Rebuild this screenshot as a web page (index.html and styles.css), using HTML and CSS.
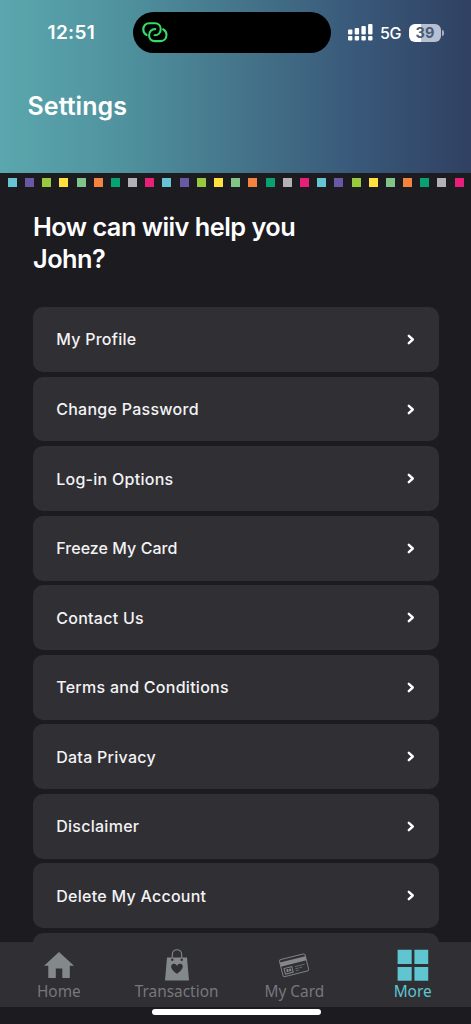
FILE: index.html
```html
<!DOCTYPE html>
<html lang="en">
<head>
<meta charset="utf-8">
<title>Settings</title>
<link rel="stylesheet" href="styles.css">
</head>
<body>
<div class="app">
  <header class="header">
    <div class="status">
      <span class="time">12:51</span>
      <div class="island">
        <svg class="link" width="26" height="21" viewBox="0 0 26 21" fill="none" stroke="#35dc69" stroke-width="2.1" stroke-linecap="round">
          <path d="M4.6 13C2.6 12 1.3 10 1.3 7.5C1.3 3.9 3.6 1.3 7.2 1.3H13C16.5 1.3 18.7 3.7 18.7 7C18.7 10.7 16.3 13.3 12.6 13.3"/>
          <path d="M21.1 7.3C23.2 8.4 24.5 10.4 24.5 12.8C24.5 16.4 22 19.1 18.5 19.1H12.8C9.3 19.1 7.1 16.6 7.1 13.4C7.1 9.5 9.6 7.1 13.3 7.1"/>
        </svg>
      </div>
      <div class="indicators">
        <svg width="25" height="17" viewBox="0 0 25 17" fill="#fff">
          <rect x="0" y="5.5" width="4.4" height="5" rx="1"/><rect x="6.7" y="4" width="4.4" height="6.5" rx="1"/><rect x="13.4" y="2" width="4.4" height="8.5" rx="1"/><rect x="20.1" y="0" width="4.4" height="10.5" rx="1"/>
          <rect x="0" y="12" width="4.4" height="4.4" rx="1"/><rect x="6.7" y="12" width="4.4" height="4.4" rx="1"/><rect x="13.4" y="12" width="4.4" height="4.4" rx="1"/><rect x="20.1" y="12" width="4.4" height="4.4" rx="1"/>
        </svg>
        <span class="network">5G</span>
        <span class="battery">39</span>
        <span class="battery-tip"></span>
      </div>
    </div>
    <h1 class="title">Settings</h1>
  </header>
  <div class="strip">
    <i class="sky"></i><i class="violet"></i><i class="lime"></i><i class="yellow"></i><i class="mint"></i><i class="orange"></i><i class="green"></i><i class="gray"></i><i class="pink"></i>
    <i class="sky"></i><i class="violet"></i><i class="lime"></i><i class="yellow"></i><i class="mint"></i><i class="orange"></i><i class="green"></i><i class="gray"></i><i class="pink"></i>
    <i class="sky"></i><i class="violet"></i><i class="lime"></i><i class="yellow"></i><i class="mint"></i><i class="orange"></i><i class="green"></i><i class="gray"></i><i class="pink"></i>
  </div>
  <main class="content">
    <h2 class="greeting">How can wiiv help you<br>John?</h2>
    <div class="list">
      <div class="row"><span>My Profile</span><svg class="chevron" viewBox="0 0 8 11"><path d="M1.8 1.8L5.8 5.5L1.8 9.2"/></svg></div>
      <div class="row"><span>Change Password</span><svg class="chevron" viewBox="0 0 8 11"><path d="M1.8 1.8L5.8 5.5L1.8 9.2"/></svg></div>
      <div class="row"><span>Log-in Options</span><svg class="chevron" viewBox="0 0 8 11"><path d="M1.8 1.8L5.8 5.5L1.8 9.2"/></svg></div>
      <div class="row tight"><span>Freeze My Card</span><svg class="chevron" viewBox="0 0 8 11"><path d="M1.8 1.8L5.8 5.5L1.8 9.2"/></svg></div>
      <div class="row"><span>Contact Us</span><svg class="chevron" viewBox="0 0 8 11"><path d="M1.8 1.8L5.8 5.5L1.8 9.2"/></svg></div>
      <div class="row"><span>Terms and Conditions</span><svg class="chevron" viewBox="0 0 8 11"><path d="M1.8 1.8L5.8 5.5L1.8 9.2"/></svg></div>
      <div class="row"><span>Data Privacy</span><svg class="chevron" viewBox="0 0 8 11"><path d="M1.8 1.8L5.8 5.5L1.8 9.2"/></svg></div>
      <div class="row"><span>Disclaimer</span><svg class="chevron" viewBox="0 0 8 11"><path d="M1.8 1.8L5.8 5.5L1.8 9.2"/></svg></div>
      <div class="row"><span>Delete My Account</span><svg class="chevron" viewBox="0 0 8 11"><path d="M1.8 1.8L5.8 5.5L1.8 9.2"/></svg></div>
      <div class="row"></div>
    </div>
  </main>
  <nav class="nav">
    <div class="tab">
      <svg width="32" height="32" viewBox="0 0 32 32" fill="#83888b"><path d="M16 3L31 16.7H26.8V29H19.3V19.5H12.8V29H5.3V16.7H1Z"/></svg>
      <span>Home</span>
    </div>
    <div class="tab">
      <svg width="32" height="32" viewBox="0 0 32 32"><path d="M11.3 10V5.8C11.3 -1 20.7 -1 20.7 5.8V10" fill="none" stroke="#83888b" stroke-width="1.1"/><path d="M6 8.5H26L28 31.5H4Z" fill="#83888b"/><circle cx="11.3" cy="10.8" r="1.2" fill="#302f34"/><circle cx="20.7" cy="10.8" r="1.2" fill="#302f34"/><path d="M16 24.8C7.2 18.8 10.3 14.6 13 14.8C14.8 14.9 15.5 16.1 16 17C16.5 16.1 17.2 14.9 19 14.8C21.7 14.6 24.8 18.8 16 24.8Z" fill="#302f34"/></svg>
      <span>Transaction</span>
    </div>
    <div class="tab">
      <svg width="32" height="32" viewBox="0 0 32 32"><g transform="rotate(-14 16 16)"><rect x="2.8" y="7.5" width="26.4" height="17.6" rx="1.8" fill="none" stroke="#7d7f83" stroke-width="1"/><path d="M2.8 10.2H29.2V14.5H2.8Z" fill="#85888b"/><rect x="5.5" y="17" width="8" height="5.8" fill="none" stroke="#85888b"/><path d="M7.3 18.5H9.3V21.3H7.3ZM10 18.5H12V21.3H10Z" fill="#85888b"/><path d="M16.3 17.8H26.5M16.3 20H19.5M20.5 20H23.3M16.3 22H19.5" stroke="#707277" stroke-width=".8"/></g></svg>
      <span>My Card</span>
    </div>
    <div class="tab active">
      <svg width="32" height="32" viewBox="0 0 32 32" fill="#5ec5d1"><path d="M.6 .8H14.7V14.9H.6ZM17.4 .8H31.2V14.9H17.4ZM.6 17.9H14.7V31.8H.6ZM17.4 17.9H31.2V31.8H17.4Z"/></svg>
      <span>More</span>
    </div>
  </nav>
  <footer class="home-area"><div class="home-bar"></div></footer>
</div>
</body>
</html>
```
FILE: styles.css
```css
* { box-sizing: border-box; }
body { margin: 0; background: #1c1b20; color: #fff; font-family: Inter, "Liberation Sans", sans-serif; }
.app { width: 471px; height: 1024px; display: flex; flex-direction: column; overflow: hidden; }
.header { height: 172.5px; flex: none; background: linear-gradient(90deg, #5ba7ae 0%, #50939f 25%, #45768b 50%, #39597a 75%, #304163 100%); }
.status { display: grid; grid-template-columns: 133px 198px 1fr; padding-top: 12px; align-items: center; }
.time { padding-left: 47.5px; font-size: 19px; font-weight: 600; line-height: 40px; letter-spacing: .35px; }
.island { height: 41px; border-radius: 21px; background: #000; display: flex; align-items: center; padding-left: 9px; }
.indicators { display: flex; align-items: center; padding-left: 16.5px; }
.network { font-size: 16px; font-weight: 500; margin-left: 7.5px; width: 22px; letter-spacing: -.3px; }
.battery { margin-left: 7px; width: 32px; height: 18px; border-radius: 6px; background: linear-gradient(90deg, #fff 39%, #b7bfd0 39%); color: #465d7b; font-size: 14.5px; font-weight: 700; line-height: 18px; text-align: center; }
.battery-tip { width: 2px; height: 6px; margin-left: 1px; border-radius: 0 2px 2px 0; background: #a5b0c4; }
.title { margin: 37px 0 0 27.5px; font-size: 25px; line-height: 32px; font-weight: 600; letter-spacing: .05px; }
.strip { height: 15px; flex: none; display: flex; gap: 8.2px; padding: 5.7px 0 0 7.8px; }
.strip i { flex: none; width: 9px; height: 9px; }
.sky { background: #65c5d3; }
.violet { background: #6858a5; }
.lime { background: #98c83d; }
.yellow { background: #ffe040; }
.mint { background: #80c48a; }
.orange { background: #f4833f; }
.green { background: #06a371; }
.gray { background: #b2b2b5; }
.pink { background: #e61f78; }
.content { flex: 1; min-height: 0; padding: 23.5px 32.5px 0 33px; overflow: hidden; }
.greeting { margin: 0; height: 96px; font-size: 25.3px; font-weight: 600; line-height: 31.5px; letter-spacing: -.52px; }
.list { display: flex; flex-direction: column; gap: 4.6px; }
.row { flex: none; height: 64.95px; border-radius: 10px; background: #302f34; display: flex; align-items: center; justify-content: space-between; padding: 0 24px 0 23.2px; font-size: 16px; font-weight: 550; letter-spacing: .27px; color: #f3f3f5; }
.tight { letter-spacing: .05px; }
.chevron { width: 8px; height: 11px; fill: none; stroke: #fff; stroke-width: 2.4; stroke-linecap: round; stroke-linejoin: round; }
.nav { flex: none; height: 65.5px; display: grid; grid-template-columns: repeat(4, 1fr); background: #302f34; padding: 7px 0 0; }
.tab { display: flex; flex-direction: column; align-items: center; color: #77787c; font: 15.4px/21px "Noto Sans", sans-serif; }
.tab svg { flex: none; }
.active { color: #5ec5d1; padding-left: 1px; }
.home-area { flex: none; height: 17px; display: flex; justify-content: center; padding: 2px 0 0 1px; }
.home-bar { width: 169px; height: 6px; border-radius: 3px; background: #fff; }
```
